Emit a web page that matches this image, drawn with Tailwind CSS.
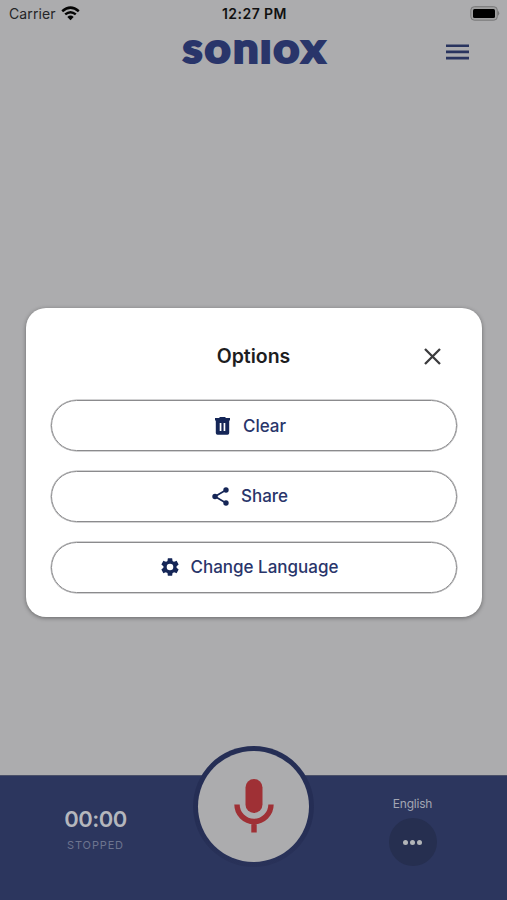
<!DOCTYPE html>
<html lang="en">
<head>
<meta charset="utf-8">
<title>Soniox</title>
<script src="https://cdn.jsdelivr.net/npm/@tailwindcss/browser@4"></script>
</head>
<body class="bg-[#acacae] font-['Inter','Liberation_Sans',sans-serif]">
<div class="relative flex h-[900px] w-[507px] flex-col overflow-hidden bg-[#acacae]">
  <header>
    <div class="grid h-[26px] grid-cols-3 items-center pl-[9px] pr-[7px] text-[14px] text-[#252527]">
      <div class="flex items-center gap-[5px]">
        <span class="tracking-[0.1px]">Carrier</span>
        <svg class="h-[15px] w-[19px]" viewBox="0 0 19 15" fill="none" stroke="#050505" stroke-width="2.5"><path d="M1.2 5.2Q9.5-2 17.8 5.2M4.2 8.4Q9.500 4 14.800 8.400"/><path d="M6.300 11Q9.500 8.200 12.700 11L9.500 14.200Z" fill="#050505" stroke="none"/></svg>
      </div>
      <span class="text-center text-[14px] font-semibold text-[#111] tracking-[0.45px]">12:27 PM</span>
      <svg class="h-[15px] w-[31px] justify-self-end" viewBox="0 0 31 15"><rect x="1.800" y=".7" width="26.500" height="13.500" rx="3.500" fill="#a0a0a1" stroke="#777778"/><rect x="4" y="3" width="22" height="9" rx="1.500" fill="#000"/><path d="M29 4.700Q31.500 7.200 29 9.700Z" fill="#777778"/></svg>
    </div>
    <div class="grid h-[51px] grid-cols-[1fr_146px_1fr] items-center">
      <span></span>
      <svg class="h-12 w-[146px] overflow-visible" viewBox="0 0 146 48"><text transform="scale(1.080 1)" x="10.700 33.900 60 78.300 97.500 122.500" y="35" text-anchor="middle" fill="#29356a" stroke="#29356a" stroke-width="2" font-family="Lato, sans-serif" font-weight="900" font-size="42">sonıox</text></svg>
      <svg class="mr-[38px] h-4 w-[23px] justify-self-end" viewBox="0 0 23 16" fill="#29345f"><path d="M0 .4h23v2.600H0zM0 6.600h23v2.600H0zM0 12.800h23v2.600H0z"/></svg>
    </div>
  </header>
  <main class="flex-1"></main>
  <footer class="relative grid h-[125px] grid-cols-3 border-t border-[#4a5068] bg-[#2c365e]">
    <div class="flex flex-col items-center pt-[29px] pl-[22px]">
      <span class="text-[22px] leading-7 font-semibold tracking-[-0.5px] text-[#b5b7bd]">00:00</span>
      <span class="mt-1 text-[11px] leading-4 tracking-[0.85px] text-[#6d748f]">STOPPED</span>
    </div>
    <div class="-mt-[30px] flex h-[121px] w-[121px] items-center justify-center justify-self-center rounded-full bg-linear-to-b from-[#252e55] from-60% to-[#293259]">
      <div class="flex h-[111px] w-[111px] items-center justify-center rounded-full bg-[#acacae]">
        <svg class="-mt-[2px] h-[54px] w-10" viewBox="0 0 40 54"><rect x="11.500" width="17" height="34" rx="8.500" fill="#9f3035"/><path d="M3 25.500a17 17 0 0 0 34 0M20 42.500V53.500" fill="none" stroke="#9f3035" stroke-width="5.400"/></svg>
      </div>
    </div>
    <div class="flex flex-col items-center pt-5 pr-[20px]">
      <span class="text-[12px] leading-4 tracking-[-0.2px] text-[#a3a6b3]">English</span>
      <div class="mt-[6px] flex h-12 w-12 items-center justify-center gap-[2.400px] rounded-full bg-[#262f50]">
        <i class="h-[5px] w-[5px] rounded-full bg-[#b2b5b8]"></i><i class="h-[5px] w-[5px] rounded-full bg-[#b2b5b8]"></i><i class="h-[5px] w-[5px] rounded-full bg-[#b2b5b8]"></i>
      </div>
    </div>
  </footer>

  <section role="dialog" class="absolute left-[26px] top-[308px] flex h-[309px] w-[456px] flex-col rounded-[20px] bg-white px-[25px] shadow-[0_1px_4px_rgba(0,0,0,.4)]">
    <div class="grid h-[92px] grid-cols-[1fr_auto_1fr] items-center pt-[5px] pr-[16px] pl-[15px]">
      <span></span>
      <h1 class="text-[19.500px] font-semibold text-[#1d1d1f]">Options</h1>
      <button aria-label="Close" class="justify-self-end"><svg class="h-[17px] w-[17px]" viewBox="0 0 17 17" fill="none" stroke="#3c3c3e" stroke-width="2.300"><path d="M1 1l15 15M16 1L1 16"/></svg></button>
    </div>
    <div class="flex flex-col gap-5 text-[17px] font-medium text-[#29356a]">
      <button class="flex h-[51px] items-center justify-center gap-[13px] rounded-full border border-[#8b8b8d] pr-[7px] pt-[2px] shadow-[0_0_0_0.500px_#a5a5a7]">
        <svg class="-mt-[2px] h-[18px] w-[15px]" viewBox="0 0 15 18" fill="#152657"><path fill-rule="evenodd" d="M0 1h4L5 0h5l1 1h4v2.500H0zM.8 3.400h13.400V16q0 1.700-1.700 1.700h-10Q.8 17.700.8 16zM4.700 6v8h1.700V6zM8.600 6v8h1.700V6z"/></svg>
        <span>Clear</span>
      </button>
      <button class="flex h-[51px] items-center justify-center gap-[12px] rounded-full border border-[#8b8b8d] pr-[8px] pt-px shadow-[0_0_0_0.500px_#a5a5a7]">
        <svg class="-mt-[2px] h-[19px] w-[17px]" viewBox="0 0 17 19" fill="#152657"><path d="M14 3L3 9.500 14 16" fill="none" stroke="#152657" stroke-width="1.700"/><circle cx="14" cy="3" r="2.700"/><circle cx="3" cy="9.500" r="2.700"/><circle cx="14" cy="16" r="2.700"/></svg>
        <span>Share</span>
      </button>
      <button class="flex h-[51px] items-center justify-center gap-[9px] rounded-full border border-[#8b8b8d] pr-[10px] pt-px shadow-[0_0_0_0.500px_#a5a5a7]">
        <svg class="-mt-[2px] h-[22px] w-[22px]" viewBox="0 0 24 24" fill="#152657"><path d="M19.140 12.940c.04-.3.060-.61.060-.94s-.02-.64-.07-.94l2.030-1.580c.18-.14.230-.41.120-.61l-1.920-3.320c-.12-.22-.37-.29-.59-.22l-2.390.96c-.5-.38-1.030-.7-1.620-.94l-.36-2.540c-.04-.24-.24-.41-.48-.41h-3.840c-.24 0-.43.170-.47.410l-.36 2.540c-.59.240-1.130.570-1.620.940l-2.390-.96c-.22-.08-.47 0-.59.220L2.740 8.870c-.12.210-.08.470.12.610l2.030 1.580c-.05.300-.09.630-.09.940s.02.640.07.940l-2.030 1.580c-.18.140-.23.410-.12.610l1.920 3.320c.12.220.37.290.59.220l2.390-.96c.5.380 1.030.700 1.620.940l.36 2.540c.05.240.24.410.48.410h3.840c.24 0 .44-.17.470-.41l.36-2.540c.59-.24 1.130-.56 1.620-.94l2.390.96c.22.080.47 0 .59-.22l1.920-3.320c.12-.22.070-.47-.12-.61zM12 15.600A3.600 3.600 0 1 1 12 8.400a3.600 3.600 0 0 1 0 7.200z"/></svg>
        <span>Change Language</span>
      </button>
    </div>
  </section>
</div>
</body>
</html>
